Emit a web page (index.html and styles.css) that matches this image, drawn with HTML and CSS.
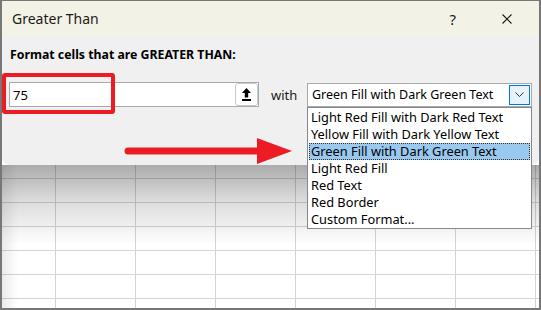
FILE: index.html
```html
<!DOCTYPE html>
<html lang="en">
<head>
    <meta charset="UTF-8">
    <title>Greater Than</title>
    <link rel="stylesheet" href="styles.css">
</head>
<body>

<div class="screen">
    <div class="dialog">
        <div class="titlebar">
            <span class="title">Greater Than</span>
            <span class="help">?</span>
            <svg class="close" width="10" height="10" viewBox="0 0 10 10">
                <path d="M0.5 0.5 L9.5 9.5 M9.5 0.5 L0.5 9.5" stroke="#1a1a1a" stroke-width="1.1" fill="none"/>
            </svg>
        </div>
        <div class="body">
            <p class="prompt">Format cells that are GREATER THAN:</p>
            <div class="row">
                <div class="value-box">
                    <span class="value">75</span>
                    <span class="pick-btn">
                        <svg width="9" height="13" viewBox="0 0 9 13">
                            <path d="M4.5 0 L9 5 L6.2 5 L6.2 9.5 L2.8 9.5 L2.8 5 L0 5 Z" fill="#000"/>
                            <rect x="0" y="11" width="9" height="2" fill="#000"/>
                        </svg>
                    </span>
                </div>
                <span class="with">with</span>
                <div class="combo">
                    <span class="combo-text">Green Fill with Dark Green Text</span>
                    <span class="combo-btn">
                        <svg width="9" height="5" viewBox="0 0 9 5">
                            <path d="M0.5 0.5 L4.5 4.5 L8.5 0.5" stroke="#333" stroke-width="1" fill="none"/>
                        </svg>
                    </span>
                </div>
            </div>
        </div>
    </div>

    <div class="sheet"></div>

    <!-- open dropdown list -->
    <ul class="options">
        <li>Light Red Fill with Dark Red Text</li>
        <li>Yellow Fill with Dark Yellow Text</li>
        <li class="selected">Green Fill with Dark Green Text</li>
        <li>Light Red Fill</li>
        <li>Red Text</li>
        <li>Red Border</li>
        <li>Custom Format...</li>
    </ul>

    <!-- annotations -->
    <div class="mark-box"></div>
    <svg class="mark-arrow" width="172" height="28" viewBox="0 0 172 28">
        <line x1="5" y1="14" x2="136" y2="14" stroke="#ed1c24" stroke-width="7" stroke-linecap="round"/>
        <path d="M134 1 L169 14 L134 27 Z" fill="#ed1c24"/>
    </svg>
</div>

</body>
</html>
```

FILE: styles.css
```css
body {
    margin: 0;
    padding: 0;
    background: #fff;
    font-family: "Noto Sans", "Open Sans", sans-serif;
}

.screen {
    position: relative;
    width: 541px;
    height: 310px;
    box-sizing: border-box;
    border: 2px solid #777;
    border-top-width: 1px;
    display: flex;
    flex-direction: column;
    overflow: hidden;
}

.dialog {
    height: 164px;
    flex: none;
    background: #f0f0f0;
    border-radius: 0 0 8px 8px;
    display: flex;
    flex-direction: column;
}

.titlebar {
    height: 35px;
    background: #f3f2e7;
    display: flex;
    align-items: center;
    padding-left: 10px;
    border-radius: 0 8px 0 0;
}

.title {
    font-size: 14px;
    color: #1a1a1a;
    flex: 1;
}

.help {
    font-size: 15px;
    color: #1a1a1a;
    margin-right: 46px;
}

.close {
    margin-right: 27px;
}

.body {
    padding: 0 7px;
}

.prompt {
    margin: 10px 0 0 1px;
    font-size: 12.3px;
    font-weight: bold;
    color: #000;
    line-height: 18px;
}

.row {
    display: flex;
    align-items: center;
    margin-top: 18px;
}

.value-box {
    width: 250px;
    height: 25px;
    box-sizing: border-box;
    border: 1px solid #a9a9a9;
    background: #fff;
    display: flex;
    align-items: center;
    justify-content: space-between;
}

.value {
    font-size: 13px;
    margin-left: 3px;
}

.pick-btn {
    width: 23px;
    height: 23px;
    box-sizing: border-box;
    border: 1px solid #c9c9c9;
    border-radius: 3px;
    background: #fff;
    display: flex;
    align-items: center;
    justify-content: center;
}

.with {
    font-size: 13px;
    margin-left: 12px;
    width: 36px;
    color: #1a1a1a;
}

.combo {
    width: 225px;
    height: 24px;
    box-sizing: border-box;
    border: 1px solid #a9a9a9;
    background: #fff;
    display: flex;
    align-items: center;
    justify-content: space-between;
}

.combo-text {
    font-size: 12.5px;
    margin-left: 4px;
}

.combo-btn {
    width: 21px;
    height: 20px;
    box-sizing: border-box;
    border: 1px solid #0078d7;
    background: #e5f1fb;
    margin-right: 1px;
    display: flex;
    align-items: center;
    justify-content: center;
}

.sheet {
    flex: 1;
    background-color: #fff;
    background-image:
        linear-gradient(to bottom, rgba(0,0,0,0.33), rgba(0,0,0,0.14) 35px, rgba(0,0,0,0) 80px),
        linear-gradient(to right, rgba(0,0,0,0.08), rgba(0,0,0,0) 16px),
        linear-gradient(to right, transparent 79px, #d4d4d4 79px),
        linear-gradient(to bottom, transparent 23px, #d4d4d4 23px);
    background-size: 100% 100%, 100% 100%, 80px 100%, 100% 24px;
    background-position: 0 0, 0 0, 54px 0, 0 14px;
    background-repeat: no-repeat, no-repeat, repeat-x, repeat-y;
}

.options {
    position: absolute;
    left: 305px;
    top: 106px;
    width: 225px;
    margin: 0;
    padding: 1px 0 0;
    list-style: none;
    box-sizing: border-box;
    border: 1px solid #828790;
    background: #fff;
}

.options li {
    font-size: 12.8px;
    height: 17px;
    line-height: 15px;
    padding-left: 1px;
    margin: 0 1px;
    box-sizing: border-box;
    border: 1px solid transparent;
    color: #000;
}

.options li.selected {
    background: #99c9ef;
    border: 1px dotted #333;
}

.mark-box {
    position: absolute;
    left: 0;
    top: 72px;
    width: 113px;
    height: 41px;
    box-sizing: border-box;
    border: 4px solid #ed1c24;
    border-radius: 3px;
}

.mark-arrow {
    position: absolute;
    left: 121px;
    top: 136px;
}
```
